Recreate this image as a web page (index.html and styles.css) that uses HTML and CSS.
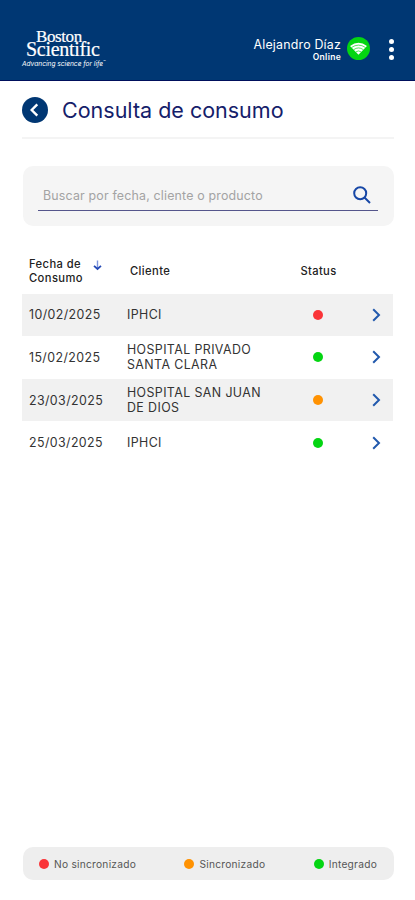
FILE: index.html
```html
<!DOCTYPE html>
<html lang="es">
<head>
    <meta charset="UTF-8">
    <meta name="viewport" content="width=device-width, initial-scale=1.0">
    <title>Consulta de consumo</title>
    <link rel="stylesheet" href="styles.css">
</head>
<body>
    <header class="topbar">
        <div class="logo">
            <span class="logo-boston">Boston</span>
            <span class="logo-scientific">Scientific</span>
            <span class="logo-tagline">Advancing science for life<sup>™</sup></span>
        </div>
        <div class="user">
            <span class="user-name">Alejandro Díaz</span>
            <span class="user-state">Online</span>
        </div>
        <svg class="wifi" viewBox="0 0 24 24">
            <circle cx="12" cy="12" r="12" fill="#04d512"/>
            <path d="M12 18.4 3.2 9.3Q12 2.6 20.8 9.3Z" fill="#fff"/>
            <path d="M4.8 10.9Q12 6 19.2 10.9M7 13.2Q12 9.6 17 13.2M9.3 15.5Q12 13.6 14.7 15.5" fill="none" stroke="#04d512" stroke-width="0.7"/>
        </svg>
        <button class="menu" aria-label="Menú">
            <span></span>
            <span></span>
            <span></span>
        </button>
    </header>

    <main class="container">
        <div class="title-row">
            <svg class="back" viewBox="0 0 26 26">
                <circle cx="13" cy="13" r="13" fill="#003773"/>
                <path d="M15.3 7.4 9.7 13l5.6 5.6" fill="none" stroke="#fff" stroke-width="2.4"/>
            </svg>
            <h1>Consulta de consumo</h1>
        </div>

        <form class="search">
            <div class="search-field">
                <input type="text" id="search" placeholder="Buscar por fecha, cliente o producto">
                <svg class="search-icon" viewBox="0 0 18 18" fill="none" stroke="#1747a6" stroke-width="2">
                    <circle cx="7.2" cy="7.2" r="6"/>
                    <path d="M11.5 11.5 17 17"/>
                </svg>
            </div>
        </form>

        <div class="table">
            <div class="row head">
                <div class="date">
                    <span>Fecha de<br>Consumo</span>
                    <svg class="sort" viewBox="0 0 9 11" fill="none" stroke="#2349b5">
                        <path d="M4.5 0.5v8" stroke-width="1.4" stroke="#7b93dc"/>
                        <path d="M1 5.8 4.5 9 8 5.8" stroke-width="1.7"/>
                    </svg>
                </div>
                <div class="client">Cliente</div>
                <div class="status">Status</div>
            </div>
            <div class="row">
                <div class="date">10/02/2025</div>
                <div class="client">IPHCI</div>
                <div class="status"><span class="dot red"></span></div>
                <svg class="arrow" viewBox="0 0 9 14"><path d="M1.2 1.2 7 7l-5.8 5.8"/></svg>
            </div>
            <div class="row">
                <div class="date">15/02/2025</div>
                <div class="client">HOSPITAL PRIVADO<br>SANTA CLARA</div>
                <div class="status"><span class="dot green"></span></div>
                <svg class="arrow" viewBox="0 0 9 14"><path d="M1.2 1.2 7 7l-5.8 5.8"/></svg>
            </div>
            <div class="row">
                <div class="date">23/03/2025</div>
                <div class="client">HOSPITAL SAN JUAN<br>DE DIOS</div>
                <div class="status"><span class="dot orange"></span></div>
                <svg class="arrow" viewBox="0 0 9 14"><path d="M1.2 1.2 7 7l-5.8 5.8"/></svg>
            </div>
            <div class="row">
                <div class="date">25/03/2025</div>
                <div class="client">IPHCI</div>
                <div class="status"><span class="dot green"></span></div>
                <svg class="arrow" viewBox="0 0 9 14"><path d="M1.2 1.2 7 7l-5.8 5.8"/></svg>
            </div>
        </div>

        <footer class="legend">
            <div class="legend-item"><span class="dot red"></span>No sincronizado</div>
            <div class="legend-item"><span class="dot orange"></span>Sincronizado</div>
            <div class="legend-item"><span class="dot green"></span>Integrado</div>
        </footer>
    </main>
</body>
</html>
```
FILE: styles.css
```css
* {
    box-sizing: border-box;
}

body {
    display: flex;
    flex-direction: column;
    height: 900px;
    margin: 0;
    background-color: #fff;
    color: #333;
    font-family: Inter, sans-serif;
}

.topbar {
    display: flex;
    height: 81px;
    padding: 0 16px 0 22px;
    background-color: #003773;
    border-bottom: 1px solid #000f5c;
    color: #fff;
}

.logo {
    display: flex;
    flex-direction: column;
    width: 90px;
    padding-top: 29px;
    font-family: "Liberation Serif", serif;
    white-space: nowrap;
}

.logo-boston {
    padding-left: 14px;
    font-size: 17px;
    line-height: 15px;
    letter-spacing: -0.4px;
    -webkit-text-stroke: 0.2px #fff;
}

.logo-scientific {
    margin-top: -3px;
    padding-left: 4px;
    font-size: 20px;
    line-height: 17px;
    letter-spacing: -0.3px;
    -webkit-text-stroke: 0.2px #fff;
}

.logo-tagline {
    margin-top: 2px;
    font-family: Inter, sans-serif;
    font-size: 6.6px;
    font-style: italic;
    line-height: 9px;
}

.logo-tagline sup {
    font-size: 4px;
    line-height: 0;
}

.user {
    display: flex;
    flex-direction: column;
    align-items: flex-end;
    margin-left: auto;
    padding-top: 37px;
}

.user-name {
    font-size: 12.4px;
    line-height: 15px;
    letter-spacing: 0.2px;
}

.user-state {
    font-size: 8.5px;
    font-weight: 600;
    line-height: 10px;
    letter-spacing: 0.3px;
}

.wifi {
    width: 23px;
    height: 23px;
    margin: 37px 0 0 6px;
}

.menu {
    display: flex;
    flex-direction: column;
    gap: 3px;
    width: 14px;
    margin: 39px 0 0 15px;
    padding: 0 4px;
    border: none;
    background: none;
}

.menu span {
    width: 5px;
    height: 5px;
    border-radius: 50%;
    background-color: #fff;
}

.container {
    display: flex;
    flex: 1;
    flex-direction: column;
    padding: 0 21px 20px 22px;
}

.title-row {
    display: flex;
    align-items: center;
    height: 58px;
    border-bottom: 2px solid #f4f4f4;
}

.back {
    width: 26px;
    height: 26px;
    margin-top: 2px;
}

h1 {
    margin: 1px 0 0 14px;
    color: #14206a;
    font-size: 21.5px;
    font-weight: 400;
    line-height: 28px;
}

.search {
    height: 60px;
    margin: 27px 0 0 1px;
    padding: 15px 16px 0 15px;
    border-radius: 10px;
    background-color: #f5f5f5;
}

.search-field {
    display: flex;
    align-items: center;
    height: 30px;
    padding: 0 7px 0 5px;
    border-bottom: 1px solid #54558b;
}

.search-field input {
    flex: 1;
    min-width: 0;
    padding: 0;
    border: none;
    outline: none;
    background: none;
    font-family: inherit;
    font-size: 12.4px;
    letter-spacing: 0.18px;
}

.search-field input::placeholder {
    color: #a3a3a3;
}

.search-icon {
    width: 18px;
    height: 18px;
    margin-bottom: 2px;
}

.table {
    margin-top: 22px;
}

.row {
    display: grid;
    grid-template-columns: 98px 153px 84px 1fr;
    align-items: center;
    width: 371px;
    height: 42.6px;
    padding-left: 7px;
    font-size: 12.4px;
    line-height: 15px;
}

.row:nth-child(even) {
    background-color: #f1f1f1;
}

.head {
    height: 45.6px;
    color: #222;
    font-size: 11.2px;
    font-weight: 500;
    line-height: 14px;
    letter-spacing: 0.35px;
}

.head .date {
    display: flex;
    gap: 10px;
}

.head .client {
    padding-left: 3px;
}

.sort {
    width: 9px;
    height: 11px;
    margin-top: 3px;
}

.date,
.client {
    letter-spacing: 0.4px;
}

.status {
    display: flex;
    justify-content: center;
    padding-right: 9px;
}

.head .status {
    padding-right: 7px;
}

.dot {
    width: 10px;
    height: 10px;
    border-radius: 50%;
}

.red {
    background-color: #fa3438;
}

.orange {
    background-color: #ff9202;
}

.green {
    background-color: #04d512;
}

.arrow {
    width: 9px;
    height: 14px;
    margin-left: 8px;
    fill: none;
    stroke: #2259ad;
    stroke-width: 2;
}

.legend {
    display: flex;
    align-items: center;
    justify-content: space-between;
    height: 33px;
    margin: auto 0 0 1px;
    padding: 0 17px 0 16px;
    border-radius: 10px;
    background-color: #eee;
}

.legend-item {
    display: flex;
    align-items: center;
    gap: 5px;
    color: #555;
    font-size: 10.2px;
    letter-spacing: 0.25px;
}
```
